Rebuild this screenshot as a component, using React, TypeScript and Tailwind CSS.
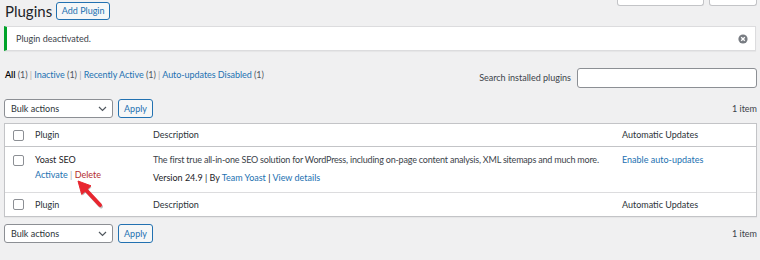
import React from "react";

const FONT = "font-['Lato','Noto_Sans',sans-serif]";

function Checkbox() {
  return <div className="w-[11px] h-[11px] rounded-[2px] border border-[#8c8f94] bg-white" />;
}

function BulkBar() {
  return (
    <div className="flex items-center">
      <div className="w-[109px] h-[19px] rounded-[3px] border border-[#8c8f94] bg-white flex items-center justify-between pl-[6px] pr-[5px] text-[#2c3338]">
        <span>Bulk actions</span>
        <svg width="9" height="6" viewBox="0 0 9 6" className="mt-[1px]">
          <path d="M1 1l3.5 3.5L8 1" fill="none" stroke="#50575e" strokeWidth="1.2" />
        </svg>
      </div>
      <div className="ml-[5px] w-[35px] h-[19px] rounded-[3px] border border-[#2271b1] bg-[#f6f7f7] text-[#2271b1] flex items-center justify-center">
        Apply
      </div>
      <div className="flex-1" />
      <div className="text-[#3c434a]">1 item</div>
    </div>
  );
}

function HeadRow({ top }: { top?: boolean }) {
  return (
    <div className={`flex items-center h-[23px] text-[#2c3338] ${top ? "border-b border-[#c3c4c7]" : ""}`}>
      <div className="w-[30px] pl-[8px]"><Checkbox /></div>
      <div className="w-[118px]">Plugin</div>
      <div className="w-[469px]">Description</div>
      <div className="flex-1">Automatic Updates</div>
    </div>
  );
}

export default function App() {
  return (
    <div className={`relative w-[760px] h-[260px] overflow-hidden bg-[#f0f0f1] ${FONT} text-[9px] leading-[14px] pl-[4px] pr-[3px]`}>
      {/* header */}
      <div className="flex items-start pt-[2px]">
        <div className="flex items-center h-[18px]">
          <h1 className="text-[15px] leading-[18px] text-[#1d2327] pl-[1px]">Plugins</h1>
          <div className="ml-[4px] h-[18px] w-[54px] rounded-[3px] border border-[#2271b1] bg-[#f6f7f7] text-[#2271b1] flex items-center justify-center">
            Add Plugin
          </div>
        </div>
        <div className="flex-1" />
        <div className="flex gap-[5px] -mt-[16px]">
          <div className="w-[87px] h-[20px] bg-white border border-[#c3c4c7] border-t-0 rounded-b-[3px] text-[#646970] flex items-end justify-center leading-[12px] pb-[5px]">
            Screen Options
          </div>
          <div className="w-[48px] h-[20px] bg-white border border-[#c3c4c7] border-t-0 rounded-b-[3px] text-[#646970] flex items-end justify-center leading-[12px] pb-[5px]">
            Help
          </div>
        </div>
      </div>

      {/* notice */}
      <div className="mt-[6px] mr-[1px] h-[25px] bg-white border border-[#dcdcde] border-l-[3px] border-l-[#00a32a] shadow-[0_1px_1px_rgba(0,0,0,0.04)] flex items-center pl-[9px] pr-[7px] text-[#3c434a]">
        <span className="flex-1">Plugin deactivated.</span>
        <svg width="10" height="10" viewBox="0 0 10 10">
          <circle cx="5" cy="5" r="4.6" fill="#787c82" />
          <path d="M3.2 3.2l3.6 3.6M6.8 3.2l-3.6 3.6" stroke="#fff" strokeWidth="1.3" />
        </svg>
      </div>

      {/* filters + search */}
      <div className="mt-[17px] flex items-start">
        <div className="pl-[1px] text-[#50575e] tracking-[-0.05px]">
          <span className="text-black font-semibold">All</span> (1) <span className="text-[#a7aaad]">|</span>{" "}
          <span className="text-[#2271b1]">Inactive</span> (1) <span className="text-[#a7aaad]">|</span>{" "}
          <span className="text-[#2271b1]">Recently Active</span> (1) <span className="text-[#a7aaad]">|</span>{" "}
          <span className="text-[#2271b1]">Auto-updates Disabled</span> (1)
        </div>
        <div className="flex-1" />
        <div className="flex items-center h-[20px]">
          <span className="text-[#3c434a] mr-[6px]">Search installed plugins</span>
          <div className="w-[180px] h-[20px] rounded-[3px] border border-[#8c8f94] bg-white" />
        </div>
      </div>

      {/* top tablenav */}
      <div className="mt-[11px]">
        <BulkBar />
      </div>

      {/* table */}
      <div className="mt-[5px] bg-white border border-[#c3c4c7] shadow-[0_1px_1px_rgba(0,0,0,0.04)]">
        <HeadRow top />
        <div className="flex items-start h-[46px] pt-[8px] border-b border-[#dcdcde]">
          <div className="w-[30px] pl-[8px]"><Checkbox /></div>
          <div className="w-[118px] -mt-[2px]">
            <div className="text-[#1d2327]">Yoast SEO</div>
            <div className="mt-[1px] text-[#2271b1]">
              Activate <span className="text-[#a7aaad]">|</span> <span className="text-[#b32d2e]">Delete</span>
            </div>
          </div>
          <div className="w-[469px] -mt-[2px] text-[#3c434a]">
            <div className="whitespace-nowrap tracking-[-0.2px]">The first true all-in-one SEO solution for WordPress, including on-page content analysis, XML sitemaps and much more.</div>
            <div className="mt-[4px] text-[#1d2327]">
              Version 24.9 | By <span className="text-[#2271b1]">Team Yoast</span> | <span className="text-[#2271b1]">View details</span>
            </div>
          </div>
          <div className="flex-1 -mt-[2px] text-[#2271b1]">Enable auto-updates</div>
        </div>
        <HeadRow />
      </div>

      {/* bottom tablenav */}
      <div className="mt-[7px]">
        <BulkBar />
      </div>

      {/* red arrow annotation */}
      <svg className="absolute left-[70px] top-[174px]" width="40" height="40" viewBox="70 174 40 40">
        <g transform="translate(1,1.5)" opacity="0.25">
          <path d="M86 190 L100 205" stroke="#000" strokeWidth="4" strokeLinecap="round" />
          <path d="M78 181 L81.7 194 L90.5 185.8 Z" fill="#000" />
        </g>
        <path d="M86 190 L100 205" stroke="#e8262f" strokeWidth="4" strokeLinecap="round" />
        <path d="M78 181 L81.7 194.5 L91 185.8 Z" fill="#e8262f" stroke="#e8262f" strokeWidth="1" strokeLinejoin="round" />
      </svg>
    </div>
  );
}
